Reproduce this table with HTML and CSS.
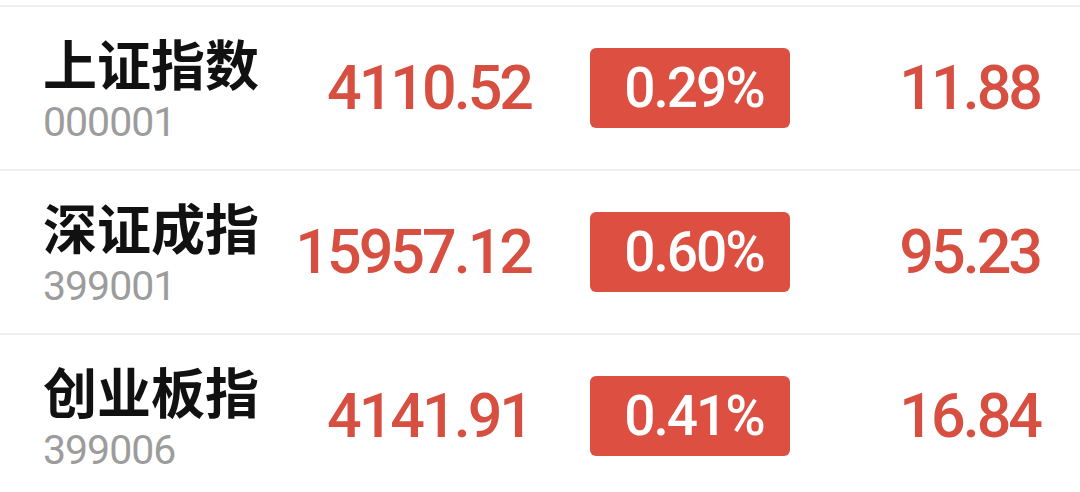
FILE: index.html
```html
<!DOCTYPE html>
<html lang="zh-CN">
<head>
  <meta charset="UTF-8" />
  <meta name="viewport" content="width=device-width, initial-scale=1.0"/>
  <title>指数</title>
  <link rel="stylesheet" href="styles.css">
</head>
<body>
  <div class="list">
    <div class="row">
      <div class="name">
        <div class="title">上证指数</div>
        <div class="code">000001</div>
      </div>
      <div class="price">4110.52</div>
      <div class="cell-badge"><span class="badge">0.29%</span></div>
      <div class="change">11.88</div>
    </div>
    <div class="row">
      <div class="name">
        <div class="title">深证成指</div>
        <div class="code">399001</div>
      </div>
      <div class="price">15957.12</div>
      <div class="cell-badge"><span class="badge">0.60%</span></div>
      <div class="change">95.23</div>
    </div>
    <div class="row">
      <div class="name">
        <div class="title">创业板指</div>
        <div class="code">399006</div>
      </div>
      <div class="price">4141.91</div>
      <div class="cell-badge"><span class="badge">0.41%</span></div>
      <div class="change">16.84</div>
    </div>
  </div>
</body>
</html>
```

FILE: styles.css
```css
body {
  margin: 0;
  background: #fff;
  font-family: "Noto Sans CJK SC", sans-serif;
}
.list {
  padding-top: 5px;
}
.row {
  display: grid;
  grid-template-columns: 235px 253px 259px 250px;
  align-items: center;
  height: 162px;
  padding-left: 43px;
  border-top: 2px solid #efefef;
}
.price, .change, .code, .badge {
  font-family: Roboto, "Liberation Sans", sans-serif;
}
.name {
  margin-top: 3px;
}
.title {
  font-size: 54px;
  font-weight: bold;
  color: #111;
  line-height: 54px;
}
.code {
  margin-top: 12px;
  font-size: 41px;
  line-height: 41px;
  color: #9c9c9c;
  letter-spacing: -1px;
}
.price, .change {
  font-size: 61px;
  font-weight: 500;
  color: #d64f40;
  text-align: right;
  letter-spacing: -3px;
}
.cell-badge {
  display: flex;
  justify-content: flex-end;
}
.badge {
  box-sizing: border-box;
  width: 200px;
  height: 80px;
  padding-left: 8px;
  line-height: 80px;
  border-radius: 6px;
  background: #dc4f41;
  color: #fff;
  font-size: 55px;
  font-weight: 500;
  text-align: center;
  letter-spacing: -2px;
}
```
